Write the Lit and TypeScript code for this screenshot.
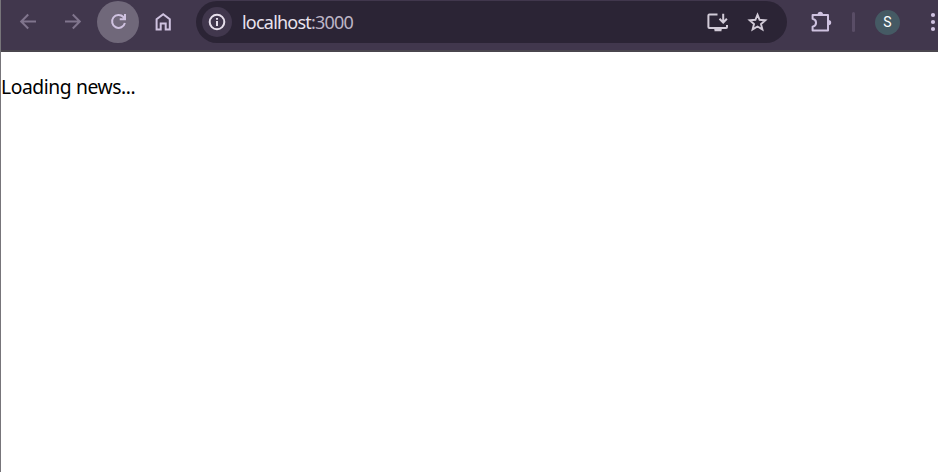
import { LitElement, html, css } from "lit";
import { customElement } from "lit/decorators.js";

@customElement("browser-toolbar")
class BrowserToolbar extends LitElement {
  static styles = css`
    :host { display: block; }
    * { box-sizing: border-box; }
    .bar {
      height: 52px; display: flex; align-items: flex-start; overflow: hidden;
      background: #41374d; border-bottom: 2px solid #4a464d; padding: 1px 0 0 6px;
    }
    .nav { display: flex; gap: 3px; }
    .btn {
      width: 42px; height: 42px; border-radius: 50%; flex: none;
      display: flex; align-items: center; justify-content: center; color: #cfc2e0;
    }
    .off { color: #80758d; }
    .hot { background: #70687a; }
    svg { display: block; width: 24px; height: 24px; fill: none; stroke: currentColor; stroke-width: 2; flex: none; }
    .address {
      width: 591px; height: 42px; margin-left: 12px; border-radius: 21px; flex: none;
      background: #2b2435; color: #d2cbd8; display: flex; align-items: center; padding: 0 17px 0 6px;
    }
    .info { width: 30px; height: 30px; border-radius: 50%; background: #41374d; color: #e6dfeb; display: flex; align-items: center; justify-content: center; }
    .url {
      margin-left: 10px; flex: 1; font: 18px/26px "Noto Sans", sans-serif;
      letter-spacing: -0.78px; color: #bdb5c6; white-space: nowrap;
    }
    .host { color: #e9e2ee; }
    .actions { display: flex; gap: 16px; }
    .tools { display: flex; align-items: center; height: 42px; color: #cfc2e0; flex: none; }
    .puzzle { margin-left: 22px; }
    .divider { width: 3px; height: 20px; border-radius: 2px; background: #594d66; margin-left: 19px; }
    .avatar {
      width: 25px; height: 25px; margin-left: 20px; border-radius: 50%; background: #455a64; color: #fff;
      font: 14px/25px Roboto, sans-serif; text-align: center;
    }
    .menu { margin-left: 20.5px; }
  `;

  render() {
    return html`
      <div class="bar">
        <div class="nav">
          <div class="btn off"><svg viewBox="0 0 24 24"><path d="M20 11.5H6M12.2 4.5L5.2 11.5L12.2 18.5"/></svg></div>
          <div class="btn off"><svg viewBox="0 0 24 24"><path d="M4 11.5H18M11.8 4.5L18.8 11.5L11.8 18.5"/></svg></div>
          <div class="btn hot"><svg viewBox="0 0 24 24"><path d="M18.9 13A6.5 6.5 0 1 1 17.4 7L18.7 8.5M19 4V9.3H13.7"/></svg></div>
          <div class="btn"><svg viewBox="0 0 24 24"><path d="M5.6 19.5V9.3L12.2 4.3L18.8 9.3V19.5H14.7V13.5H9.7V19.5Z"/></svg></div>
        </div>
        <div class="address">
          <div class="info"><svg viewBox="0 0 24 24"><circle cx="12" cy="12" r="7.3"/><path d="M12 11V16M12 8V9.8"/></svg></div>
          <div class="url"><span class="host">localhost</span>:3000</div>
          <div class="actions">
            <svg viewBox="0 0 24 24"><path d="M11.5 4.6H3.4Q2.4 4.6 2.4 5.6V17Q2.4 18 3.4 18H20Q21 18 21 17V15M17.2 3.8V12M13.5 8.8L17.2 12.5L20.9 8.8M8.5 20.2H15.5"/><path stroke-width="2" d="M8.5 19H15.5"/></svg>
            <svg viewBox="0 0 24 24"><path stroke-width="1.9" d="M11.5 4.7L13.6 9.8L19.3 10.3L15 14L16.4 19.4L11.5 16.5L6.6 19.4L8 14L3.7 10.3L9.4 9.8Z"/></svg>
          </div>
        </div>
        <div class="tools">
          <svg class="puzzle" viewBox="0 0 24 24"><path stroke-linejoin="round" d="M3.8 4.9H19V20.5H3.6V16.8C8.2 15.6 8.2 9.8 3.6 8.8V4.9Z"/><path fill="currentColor" stroke="none" d="M8.6 4.5A2.7 2.7 0 0 1 14 4.5ZM19.5 9.9A2.7 2.7 0 0 1 19.5 15.3Z"/></svg>
          <div class="divider"></div>
          <div class="avatar">S</div>
          <svg class="menu" viewBox="0 0 24 24"><g fill="currentColor" stroke="none"><circle cx="12" cy="5" r="2.1"/><circle cx="12" cy="12" r="2.1"/><circle cx="12" cy="19" r="2.1"/></g></svg>
        </div>
      </div>`;
  }
}

@customElement("app-root")
class AppRoot extends LitElement {
  static styles = css`
    :host { display: block; box-sizing: border-box; height: 472px; overflow: hidden; background: #fff; border-left: 1px solid #77757a; }
    .status { margin: 0; padding-top: 21px; font: 19.3px/28px "Noto Sans", sans-serif; letter-spacing: -0.41px; color: #000; }
  `;

  render() {
    return html`<browser-toolbar></browser-toolbar><p class="status">Loading news...</p>`;
  }
}
